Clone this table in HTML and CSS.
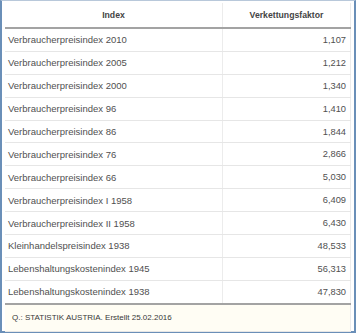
FILE: index.html
```html
<!DOCTYPE html>
<html lang="de">
<head>
<meta charset="utf-8">
<link rel="stylesheet" href="styles.css">
</head>
<body>
<div class="frame">
  <table class="vpi">
    <thead>
      <tr><th class="c1">Index</th><th class="c2">Verkettungsfaktor</th></tr>
    </thead>
    <tbody>
      <tr><td>Verbraucherpreisindex 2010</td><td class="num">1,107</td></tr>
      <tr><td>Verbraucherpreisindex 2005</td><td class="num">1,212</td></tr>
      <tr><td>Verbraucherpreisindex 2000</td><td class="num">1,340</td></tr>
      <tr><td>Verbraucherpreisindex 96</td><td class="num">1,410</td></tr>
      <tr><td>Verbraucherpreisindex 86</td><td class="num">1,844</td></tr>
      <tr><td>Verbraucherpreisindex 76</td><td class="num">2,866</td></tr>
      <tr><td>Verbraucherpreisindex 66</td><td class="num">5,030</td></tr>
      <tr><td>Verbraucherpreisindex I 1958</td><td class="num">6,409</td></tr>
      <tr><td>Verbraucherpreisindex II 1958</td><td class="num">6,430</td></tr>
      <tr><td>Kleinhandelspreisindex 1938</td><td class="num">48,533</td></tr>
      <tr><td>Lebenshaltungskostenindex 1945</td><td class="num">56,313</td></tr>
      <tr class="last"><td>Lebenshaltungskostenindex 1938</td><td class="num">47,830</td></tr>
    </tbody>
    <tfoot>
      <tr><td colspan="2" class="src">Q.: STATISTIK AUSTRIA. Erstellt 25.02.2016</td></tr>
    </tfoot>
  </table>
</div>
</body>
</html>
```
FILE: styles.css
```css
html, body {
  margin: 0;
  padding: 0;
  background: #ffffff;
}
.frame {
  box-sizing: border-box;
  width: 356px;
  height: 333px;
  border: 2px solid #6a8fb8;
  border-top: 1px solid #b8c8da;
  padding: 2px 3px 0 3px;
  font-family: "Liberation Sans", Arial, sans-serif;
  color: #505050;
}
.vpi {
  width: 346px;
  border-collapse: collapse;
  table-layout: fixed;
}
.vpi th {
  height: 24px;
  padding: 0;
  font-size: 8.7px;
  font-weight: bold;
  color: #444;
  text-align: center;
  border-bottom: 2px solid #a3a3a3;
  border-right: 1px solid #ececec;
}
.vpi th.c1 { width: 217px; }
.vpi td {
  height: 21.9px;
  padding: 0 4px 0 3px;
  font-size: 9.5px;
  border-bottom: 1px solid #e6e6e6;
  border-right: 1px solid #ececec;
  white-space: nowrap;
}
.vpi td.num {
  text-align: right;
  font-size: 9.3px;
}
.vpi tr.last td {
  border-bottom: 2px solid #a3a3a3;
}
.vpi td.src {
  height: 26px;
  background: #fffdf4;
  font-size: 8px;
  padding-left: 7px;
  color: #383838;
}
```
